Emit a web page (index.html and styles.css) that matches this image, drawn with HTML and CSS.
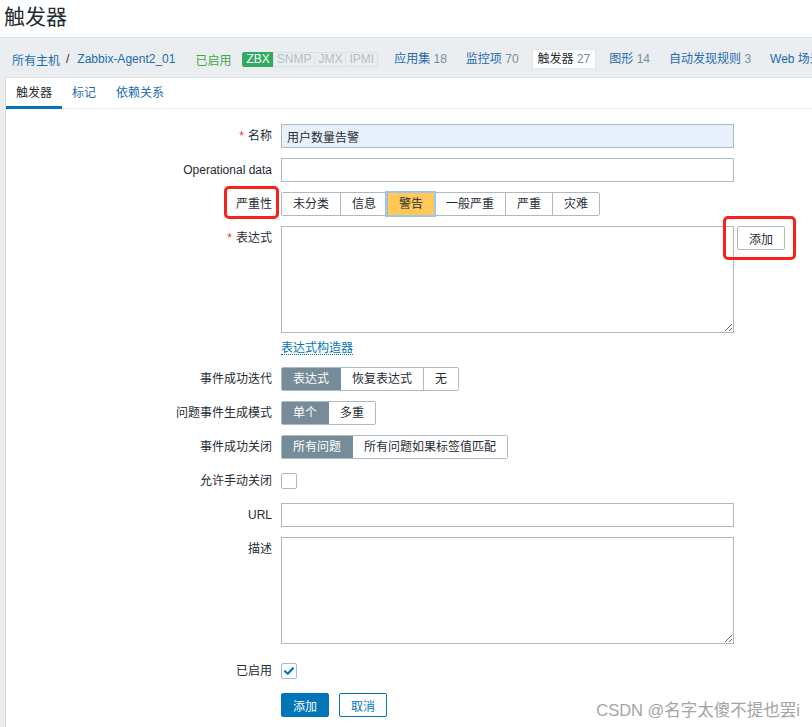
FILE: index.html
```html
<!DOCTYPE html>
<html lang="zh-CN">
<head>
<meta charset="utf-8">
<title>触发器</title>
<link rel="stylesheet" href="styles.css">
</head>
<body>
<header class="page-title"><h1>触发器</h1></header>
<main class="wrap">
  <nav class="host-nav">
    <div class="crumbs"><a class="link">所有主机</a><span class="sep">/</span><a class="link">Zabbix-Agent2_01</a></div>
    <span class="status">已启用</span>
    <div class="avail"><span class="tag on">ZBX</span><span class="tag">SNMP</span><span class="tag">JMX</span><span class="tag">IPMI</span></div>
    <ul class="host-links">
      <li><a class="link">应用集</a> <span class="cnt">18</span></li>
      <li><a class="link">监控项</a> <span class="cnt">70</span></li>
      <li class="current"><span>触发器</span> <span class="cnt">27</span></li>
      <li><a class="link">图形</a> <span class="cnt">14</span></li>
      <li><a class="link">自动发现规则</a> <span class="cnt">3</span></li>
      <li><a class="link">Web 场景</a></li>
    </ul>
  </nav>
  <section class="card">
    <ul class="tabs">
      <li class="active">触发器</li>
      <li>标记</li>
      <li>依赖关系</li>
    </ul>
    <form class="form">
      <div class="row">
        <label class="lbl"><span class="req">*</span>名称</label>
        <div class="field"><input class="text filled" type="text" value="用户数量告警"></div>
      </div>
      <div class="row">
        <label class="lbl">Operational data</label>
        <div class="field"><input class="text" type="text"></div>
      </div>
      <div class="row">
        <label class="lbl"><span class="mark mark-label">严重性</span></label>
        <div class="field">
          <ul class="seg">
            <li>未分类</li><li>信息</li><li class="warn">警告</li><li>一般严重</li><li>严重</li><li>灾难</li>
          </ul>
        </div>
      </div>
      <div class="row">
        <label class="lbl"><span class="req">*</span>表达式</label>
        <div class="field">
          <div class="expr">
            <textarea class="area"></textarea>
            <span class="mark mark-btn"><button type="button" class="btn-grey">添加</button></span>
          </div>
          <a class="builder">表达式构造器</a>
        </div>
      </div>
      <div class="row">
        <label class="lbl">事件成功迭代</label>
        <div class="field"><ul class="seg"><li class="sel">表达式</li><li>恢复表达式</li><li>无</li></ul></div>
      </div>
      <div class="row">
        <label class="lbl">问题事件生成模式</label>
        <div class="field"><ul class="seg"><li class="sel">单个</li><li>多重</li></ul></div>
      </div>
      <div class="row">
        <label class="lbl">事件成功关闭</label>
        <div class="field"><ul class="seg"><li class="sel">所有问题</li><li>所有问题如果标签值匹配</li></ul></div>
      </div>
      <div class="row">
        <label class="lbl">允许手动关闭</label>
        <div class="field"><span class="check"></span></div>
      </div>
      <div class="row">
        <label class="lbl">URL</label>
        <div class="field"><input class="text" type="text"></div>
      </div>
      <div class="row">
        <label class="lbl">描述</label>
        <div class="field"><textarea class="area"></textarea></div>
      </div>
      <div class="row row-enabled">
        <label class="lbl">已启用</label>
        <div class="field"><span class="check"><svg width="14" height="14" viewBox="0 0 14 14"><path d="M3 7.2 L5.8 9.8 L11 4.2" fill="none" stroke="#0275b8" stroke-width="2.2" stroke-linecap="round" stroke-linejoin="round"/></svg></span></div>
      </div>
      <div class="row">
        <span class="lbl"></span>
        <div class="field actions"><button type="button" class="btn-main">添加</button><button type="button" class="btn-alt">取消</button></div>
      </div>
    </form>
  </section>
</main>
<div class="watermark">CSDN @名字太傻不提也罢i</div>
</body>
</html>
```

FILE: styles.css
```css
* { box-sizing: border-box; }
html, body { margin: 0; padding: 0; }
body {
  width: 812px;
  height: 727px;
  overflow: hidden;
  position: relative;
  display: flex;
  flex-direction: column;
  font-family: "Liberation Sans", Arial, "Noto Sans CJK SC", sans-serif;
  font-size: 12px;
  color: #1f2c33;
  background: #fff;
}
.page-title { height: 37px; padding-left: 4px; flex: none; }
.page-title h1 {
  margin: 0;
  font-weight: normal;
  font-size: 21px;
  line-height: 31px;
  color: #1f2c33;
  font-family: "Noto Sans CJK SC", sans-serif;
}
.wrap {
  flex: 1;
  display: flex;
  flex-direction: column;
  background: #ebeef0;
  border-top: 1px solid #dde3e6;
  padding-left: 5px;
}
.host-nav {
  display: flex;
  align-items: center;
  white-space: nowrap;
  padding: 11px 0 8px;
  height: 39px;
}
.link { color: #1e6bb0; text-decoration: none; }
.crumbs { margin-left: 7px; display: flex; align-items: center; }
.crumbs .sep { margin: 0 8px 0 6px; color: #1f2c33; }
.status { margin-left: 20px; color: #3fa844; }
.avail { margin-left: 11px; display: flex; }
.tag {
  height: 15px;
  line-height: 13px;
  padding: 0 3px;
  border: 1px solid #dbe1e5;
  margin-left: -1px;
  color: #b3bec5;
  font-size: 12px;
}
.tag.on { background: #2fac62; border-color: #2fac62; color: #fff; margin-left: 0; border-radius: 2px 0 0 2px; }
.tag:last-child { border-radius: 0 2px 2px 0; }
.host-links {
  list-style: none;
  margin: 0 0 0 10px;
  padding: 0;
  display: flex;
  gap: 7px;
}
.host-links li { padding: 0 6px; height: 20px; line-height: 20px; }
.host-links li.current { background: #fff; border: 1px solid #e3e7ea; line-height: 18px; padding: 0 5px; }
.cnt { color: #768d99; }
.card {
  flex: 1;
  background: #fff;
  border-left: 1px solid #d9dcde;
  border-top: 1px solid #dfe4e7;
}
.tabs {
  list-style: none;
  margin: 0;
  padding: 0;
  display: flex;
  border-bottom: 1px solid #ebeef0;
}
.tabs li {
  padding: 7px 10px 7px;
  line-height: 14px;
  color: #1e6bb0;
  border-bottom: 3px solid transparent;
  margin-bottom: -1px;
  font-family: "Noto Sans CJK SC", sans-serif;
}
.tabs li.active { color: #1f2c33; border-bottom-color: #0275b8; }
.form {
  display: flex;
  flex-direction: column;
  gap: 10px;
  padding-top: 15px;
}
.row {
  display: grid;
  grid-template-columns: 266px 1fr;
  column-gap: 9px;
  align-items: start;
}
.lbl {
  text-align: right;
  line-height: 24px;
  color: #1f2c33;
}
.req { color: #e33734; margin-right: 4px; }
.field { display: flex; flex-direction: column; align-items: flex-start; }
.text {
  width: 453px;
  height: 24px;
  border: 1px solid #acbbc2;
  padding: 0 5px;
  font: inherit;
  color: #1f2c33;
  background: #fff;
  outline: none;
}
.text.filled { background: #e8f0fc; }
.area {
  display: block;
  width: 453px;
  height: 107px;
  border: 1px solid #acbbc2;
  padding: 4px 5px;
  font: inherit;
  background: #fff;
  resize: both;
  outline: none;
  margin: 0;
}
.expr { display: flex; align-items: flex-start; gap: 3px; }
.builder {
  margin-top: 6px;
  margin-bottom: 2px;
  line-height: 15px;
  color: #0275b8;
  border-bottom: 1px dotted #0275b8;
  font-family: "Noto Sans CJK SC", sans-serif;
}
.seg {
  list-style: none;
  margin: 0;
  padding: 0;
  display: flex;
  border: 1px solid #acbbc2;
  border-radius: 2px;
  height: 24px;
}
.seg li {
  padding: 0 11px;
  line-height: 22px;
  color: #1f2c33;
  background: #fff;
  white-space: nowrap;
}
.seg li + li { border-left: 1px solid #acbbc2; }
.seg li.sel { background: #768d99; color: #fff; }
.seg li.sel + li { border-left-color: #768d99; }
.seg li.warn {
  background: #ffc859;
  outline: 2px solid #9fc6e8;
  outline-offset: 0;
  position: relative;
  z-index: 1;
}
.check {
  display: flex;
  align-items: center;
  justify-content: center;
  width: 16px;
  height: 16px;
  margin-top: 4px;
  border: 1px solid #acbbc2;
  border-radius: 2px;
  background: #fff;
}
.row-enabled { margin-top: 5px; }
.actions { flex-direction: row; gap: 10px; }
button { font: inherit; cursor: pointer; }
.btn-main {
  height: 24px;
  padding: 0 11px;
  border: 1px solid #0275b8;
  border-radius: 2px;
  background: #0275b8;
  color: #fff;
}
.btn-alt {
  height: 24px;
  padding: 0 11px;
  border: 1px solid #0275b8;
  border-radius: 2px;
  background: #fff;
  color: #0275b8;
}
.btn-grey {
  display: block;
  height: 24px;
  padding: 0 11px;
  border: 1px solid #acbbc2;
  border-radius: 2px;
  background: #fff;
  color: #1f2c33;
}
.mark { position: relative; display: inline-block; }
.mark::after {
  content: "";
  position: absolute;
  border: 3px solid #f5231c;
  border-radius: 5px;
  pointer-events: none;
}
.mark-label::after { left: -12px; right: -7px; top: -6px; bottom: -3px; }
.mark-btn::after { left: -14px; right: -11px; top: -10px; bottom: -10px; }
.watermark {
  position: absolute;
  right: 12px;
  top: 700px;
  line-height: 20px;
  font-size: 16.5px;
  color: #a4a4a4;
  white-space: nowrap;
}
```
